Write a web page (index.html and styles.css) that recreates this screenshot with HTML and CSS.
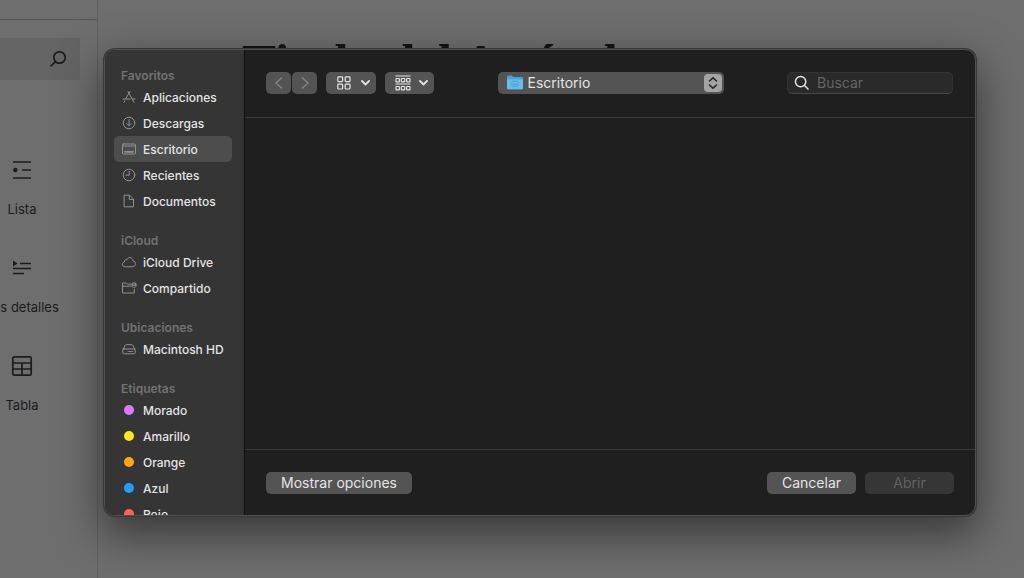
FILE: index.html
```html
<!DOCTYPE html>
<html lang="es">
<head>
<meta charset="utf-8">
<title>Abrir archivo</title>
<link rel="stylesheet" href="styles.css">
</head>
<body>
<div class="editor">
  <aside class="inserter">
    <div class="inserter-top"></div>
    <button class="block-search" aria-label="Buscar bloques">
      <svg width="18" height="18" viewBox="0 0 18 18" fill="none" stroke="currentColor" stroke-width="1.7"><circle cx="10.5" cy="7.5" r="5.7"/><path d="M6.4 11.6 1.5 16.5"/></svg>
    </button>
    <div class="blocks">
      <button class="block">
        <svg width="24" height="24" viewBox="0 0 24 24" fill="none" stroke="currentColor" stroke-width="1.7"><path d="M3 4h18M12 12h9M3 20h18"/><circle cx="5.3" cy="12" r="2.2" fill="currentColor" stroke="none"/></svg>
        <span>Lista</span>
      </button>
      <button class="block">
        <svg width="24" height="24" viewBox="0 0 24 24" fill="none" stroke="currentColor" stroke-width="1.7"><path d="M10 7.5h11M3 12.5h18M3 17.5h11"/><path d="M3 4.5 7.5 7.5 3 10.5z" fill="currentColor" stroke="none"/></svg>
        <span>Los detalles</span>
      </button>
      <button class="block">
        <svg width="24" height="24" viewBox="0 0 24 24" fill="none" stroke="currentColor" stroke-width="1.7"><rect x="2.8" y="2.8" width="18.4" height="18.4" rx="1.5"/><path d="M3 9h18M3 15h18M12 9v12"/></svg>
        <span>Tabla</span>
      </button>
    </div>
  </aside>
  <main class="canvas"><h1>Titulo del Artículo</h1></main>
</div>

<div class="dialog" role="dialog" aria-label="Abrir">
  <nav class="sidebar">
    <section class="group">
      <h2>Favoritos</h2>
      <button class="item"><svg class="icon" viewBox="0 0 16 16"><path d="M7 2.5 11.7 11M9 2.5 4.6 10M2 10h7.2M11.3 10H14M3.8 11.8l-.8 1.5M12 11.5l1 1.8"/></svg>Aplicaciones</button>
      <button class="item"><svg class="icon" viewBox="0 0 16 16"><circle cx="8" cy="8" r="5.8"/><path d="M8 4.8v6M5.8 8.6 8 10.8l2.2-2.2"/></svg>Descargas</button>
      <button class="item selected"><svg class="icon" viewBox="0 0 16 16"><rect x="1.5" y="3" width="13" height="10" rx="1"/><path d="M1.5 5h13"/><path d="M4 10.8h8" stroke-width="1.8"/></svg>Escritorio</button>
      <button class="item"><svg class="icon" viewBox="0 0 16 16"><circle cx="8" cy="8" r="5.8"/><path d="M8.3 4.2v4H4.8"/></svg>Recientes</button>
      <button class="item"><svg class="icon" viewBox="0 0 16 16"><path d="M3.5 2.2h5l4 4v7.6h-9zM8.3 2.4v4h4"/></svg>Documentos</button>
    </section>
    <section class="group">
      <h2>iCloud</h2>
      <button class="item"><svg class="icon" viewBox="0 0 16 16"><path d="M4 12.8C.6 12.8.3 8.8 3.3 8.2 3.2 5.8 5.2 5.6 5.7 5.8 7 2.3 11.8 3 12 6.9c3.5.3 3.2 5.9-.5 5.9z"/></svg>iCloud Drive</button>
      <button class="item"><svg class="icon" viewBox="0 0 16 16"><path d="M9.5 4.2h-3L5.4 3H1.5v10h11.8V9M1.5 6.2h8.2"/><circle cx="13" cy="5" r="2.7" fill="#8c8c8c" stroke="none"/><path d="M13 3.4v1.2M12 6.3h2" stroke="#353535"/></svg>Compartido</button>
    </section>
    <section class="group">
      <h2>Ubicaciones</h2>
      <button class="item"><svg class="icon" viewBox="0 0 16 16"><path d="m2 8.5 2.2-4.2c.2-.5.5-.6 1-.6h5.6c.5 0 .8.2 1 .6L14 8.5"/><rect x="1.7" y="8" width="12.6" height="4.8" rx="1.6"/><path d="M7 10.5h5" stroke-width=".8"/></svg>Macintosh HD</button>
    </section>
    <section class="group">
      <h2>Etiquetas</h2>
      <button class="item"><i class="tag purple"></i>Morado</button>
      <button class="item"><i class="tag yellow"></i>Amarillo</button>
      <button class="item"><i class="tag orange"></i>Orange</button>
      <button class="item"><i class="tag blue"></i>Azul</button>
      <button class="item"><i class="tag red"></i>Rojo</button>
    </section>
  </nav>
  <div class="content">
    <header class="toolbar">
      <div class="history">
        <button class="nav" aria-label="Atrás"><svg width="10" height="14" viewBox="0 0 10 14"><path d="M8 1.5 2 7l6 5.5"/></svg></button>
        <button class="nav" aria-label="Adelante"><svg width="10" height="14" viewBox="0 0 10 14"><path d="m2 1.5 6 5.5-6 5.5"/></svg></button>
      </div>
      <button class="view" aria-label="Ver como iconos">
        <svg width="14" height="14" viewBox="0 0 14 14"><rect x=".8" y=".8" width="4.8" height="4.8" rx=".8"/><rect x="8.2" y=".8" width="4.8" height="4.8" rx=".8"/><rect x=".8" y="8.2" width="4.8" height="4.8" rx=".8"/><rect x="8.2" y="8.2" width="4.8" height="4.8" rx=".8"/></svg>
        <svg class="chevron" width="9" height="6" viewBox="0 0 9 6"><path d="m1 1 3.5 3.5L8 1"/></svg>
      </button>
      <button class="view" aria-label="Agrupar">
        <svg width="16" height="16" viewBox="0 0 16 16"><path d="M.5 1h15M.5 9h15"/><rect x="1" y="3.5" width="3.4" height="3.4" rx=".6"/><rect x="6.3" y="3.5" width="3.4" height="3.4" rx=".6"/><rect x="11.6" y="3.5" width="3.4" height="3.4" rx=".6"/><rect x="1" y="11.5" width="3.4" height="3.4" rx=".6"/><rect x="6.3" y="11.5" width="3.4" height="3.4" rx=".6"/><rect x="11.6" y="11.5" width="3.4" height="3.4" rx=".6"/></svg>
        <svg class="chevron" width="9" height="6" viewBox="0 0 9 6"><path d="m1 1 3.5 3.5L8 1"/></svg>
      </button>
      <div class="location">
        <svg width="16" height="15" viewBox="0 0 16 15"><path d="M0 2Q0 .5 1.3.5h3.4L6.3 2h8.2Q16 2 16 3.3V13q0 1.3-1.3 1.3H1.3Q0 14.3 0 13z" fill="#4aa3d8"/><path d="M0 4.3h16V13q0 1.3-1.3 1.3H1.3Q0 14.3 0 13z" fill="#67bdec"/><rect x="4.8" y="6.3" width="6.4" height="5" rx="1" fill="none" stroke="#449bd0" stroke-width=".8"/><path d="M6 9.3h4" stroke="#449bd0"/></svg>
        <select aria-label="Ubicación"><option>Escritorio</option></select>
        <span class="stepper"><svg width="10" height="14" viewBox="0 0 10 14"><path d="M1.500 5 5 1.800 8.500 5M1.500 9 5 12.200 8.500 9"/></svg></span>
      </div>
      <label class="search">
        <svg width="16" height="16" viewBox="0 0 16 16"><circle cx="6.6" cy="6.6" r="5.2"/><path d="m10.5 10.5 4 4"/></svg>
        <input type="text" placeholder="Buscar" aria-label="Buscar">
      </label>
    </header>
    <div class="files"></div>
    <footer class="actions">
      <button class="push options">Mostrar opciones</button>
      <button class="push">Cancelar</button>
      <button class="push" disabled>Abrir</button>
    </footer>
  </div>
</div>
</body>
</html>
```
FILE: styles.css
```css
* { box-sizing: border-box; }
body {
  margin: 0;
  height: 100vh;
  overflow: hidden;
  background: #6e6e6e;
  font-family: Inter, "Liberation Sans", sans-serif;
}
button, input, select { font: inherit; color: inherit; border: 0; padding: 0; margin: 0; background: none; }
h1, h2 { margin: 0; }
svg { flex: none; }

.editor { display: flex; height: 100%; color: #1c1c1c; }
.inserter { width: 98px; flex: none; border-right: 1px solid #5f5f5f; overflow: hidden; }
.inserter-top { height: 20px; border-bottom: 1px solid #595959; }
.block-search {
  display: flex;
  align-items: center;
  justify-content: flex-end;
  width: 80px;
  height: 42px;
  margin-top: 18px;
  padding-right: 13px;
  background: #646464;
}
.blocks { display: flex; flex-direction: column; width: 44px; padding-top: 78px; gap: 38px; }
.block { display: flex; flex-direction: column; align-items: center; gap: 18px; height: 60px; white-space: nowrap; font-size: 13px; line-height: 18px; }
.block span { flex: none; }
.canvas { flex: 1; padding: 32px 0 0 144px; }
.canvas h1 { font-family: "Liberation Serif", serif; font-size: 51px; line-height: 60px; font-weight: 700; color: #141414; }

.dialog {
  position: absolute;
  inset: 49px 48px 62px 104px;
  display: flex;
  overflow: hidden;
  border: 1px solid #515151;
  border-radius: 11px;
  background: #1f1f1f;
  color: #e4e4e4;
  box-shadow: 0 0 0 1px #383838, 0 16px 44px 2px rgba(0, 0, 0, .5);
}
.sidebar { width: 139px; flex: none; display: flex; flex-direction: column; gap: 19px; padding: 18px 11px 0 9px; background: #353535; border-right: 1px solid #303030; overflow: hidden; }
.group { flex: none; }
.group h2 { padding-left: 7px; font-size: 12px; line-height: 16px; font-weight: 600; color: #727272; }
.item { display: flex; align-items: center; gap: 6px; width: 100%; height: 26px; padding-left: 7px; border-radius: 5px; font-size: 12px; font-weight: 500; white-space: nowrap; }
.selected { background: #4d4d4d; }
.icon { width: 16px; height: 16px; fill: none; stroke: #919191; stroke-width: 1; stroke-linecap: round; stroke-linejoin: round; }
.tag { width: 10px; height: 10px; margin: 0 3px; border-radius: 50%; }
.purple { background: #dc79ff; }
.yellow { background: #ffe61a; }
.orange { background: #ffa514; }
.blue { background: #229bff; }
.red { background: #ff6157; }

.content { flex: 1; min-width: 0; display: flex; flex-direction: column; border-left: 1px solid #111; }
.toolbar { display: flex; align-items: center; height: 68px; padding: 0 22px 2px 21px; border-bottom: 1px solid #383838; }
.toolbar svg { fill: none; stroke: currentColor; }
.history { display: flex; gap: 1px; }
.nav { display: grid; place-items: center; width: 25px; height: 22px; border-radius: 5px; background: #545454; color: #828282; stroke-width: 1.5; }
.view { display: flex; align-items: center; justify-content: center; gap: 10px; width: 50px; height: 22px; margin-left: 9px; padding-left: 4px; border-radius: 5px; background: #545454; stroke-width: 1.2; }
.view + .view { width: 49px; gap: 8px; }
.view .chevron { stroke-width: 1.8; stroke-linecap: round; }
.location { display: flex; align-items: center; gap: 5px; flex: 0 1 226px; height: 22px; margin: 0 auto; padding: 0 2px 0 9px; border-radius: 5px; background: #545454; }
.toolbar .location svg { stroke: none; }
.location select { flex: 1; min-width: 0; appearance: none; height: 22px; font-size: 14px; outline: 0; }
.stepper { display: grid; place-items: center; width: 18px; height: 18px; border-radius: 4px; background: #a3a3a3; color: #282828; }
.toolbar .stepper svg { stroke: currentColor; stroke-width: 1.6; stroke-linecap: round; }
.search { display: flex; align-items: center; gap: 7px; width: 166px; height: 22px; padding-left: 6px; border: 1px solid #323232; border-bottom-color: #484848; border-radius: 5px; background: #2a2a2a; stroke-width: 1.5; }
.search input { flex: 1; min-width: 0; font-size: 14px; outline: 0; }
.search input::placeholder { color: #646464; opacity: 1; }
.files { flex: 1; }
.actions { display: flex; align-items: center; gap: 9px; height: 66px; padding: 0 21px; border-top: 1px solid #383838; }
.push { width: 89px; height: 22px; border-radius: 5px; background: #545454; font-size: 14px; line-height: 20px; }
.push:disabled { background: #363636; color: #626262; }
.options { width: 146px; margin-right: auto; }
```
